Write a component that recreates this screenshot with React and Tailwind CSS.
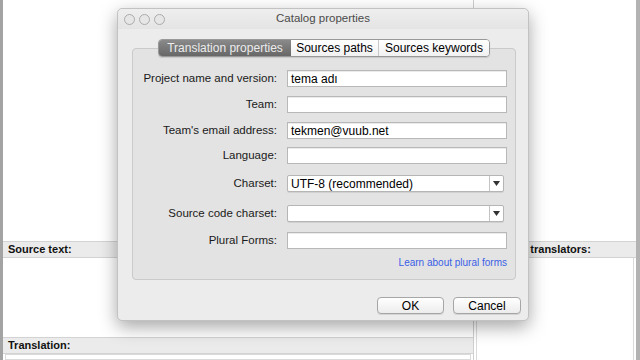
import React from "react";

const font = "font-['Liberation_Sans','Lucida_Grande',Arial,sans-serif]";

const Field = ({ label, value, combo, className = "" }) => (
    <div className={`flex items-center ${className}`}>
        <div className="w-[144px] text-right text-[11.5px] text-[#1a1a1a] leading-none">{label}</div>
        {combo ? (
            <div className="ml-[10px] w-[217px] h-[17px] flex bg-white border border-[#b5b5b5] rounded-[2px] shadow-[0_1px_0_rgba(0,0,0,0.08)]">
                <div className="flex-1 flex items-center px-[3px] text-[12px] text-black">{value}</div>
                <div className="w-[14px] border-l border-[#c4c4c4] flex items-center justify-center">
                    <svg width="7" height="5" viewBox="0 0 7 5">
                        <path d="M0 0 L7 0 L3.5 5 Z" fill="#333" />
                    </svg>
                </div>
            </div>
        ) : (
            <div className="ml-[10px] w-[220px] h-[17px] flex items-center px-[3px] bg-white border border-[#b8b8b8] shadow-[inset_0_1px_0_rgba(0,0,0,0.08)] text-[12px] text-black">
                {value}
            </div>
        )}
    </div>
);

const Header = ({ children }) => (
    <div className="h-[17px] flex items-center px-[5px] bg-[#ebebeb] border-y border-[#d3d3d3] text-[11px] font-bold text-[#111]">
        {children}
    </div>
);

export default function App() {
    return (
        <div className={`relative w-[640px] h-[360px] overflow-hidden bg-white flex ${font}`}>
            <div className="w-[3px] bg-[#a3a3a3]" />

            <div className="w-[471px] flex flex-col border-r border-[#cfcfcf]">
                <div className="h-[241px] bg-white" />
                <Header>Source text:</Header>
                <div className="h-[79px] bg-white" />
                <Header>Translation:</Header>
                <div className="flex-1 bg-white mx-[2px] border border-[#dadada]" />
            </div>

            <div className="flex-1 flex flex-col">
                <div className="h-[241px] bg-white" />
                <Header>Notes for translators:</Header>
                <div className="flex-1 bg-white mx-[2px] border-x border-[#dadada]" />
            </div>

            <div className="w-[4px] bg-[#b3b3b3]" />

            {/* dialog */}
            <div className="absolute left-[117px] top-[8px] w-[412px] h-[313px] flex flex-col rounded-[5px] bg-[#ececec] border border-[#c2c2c2] shadow-[0_6px_18px_rgba(0,0,0,0.35)]">
                <div className="relative h-[20px] flex items-center pl-[6px] gap-[4px] rounded-t-[5px] bg-gradient-to-b from-[#eeeeee] to-[#e4e4e4]">
                    <div className="w-[11px] h-[11px] rounded-full bg-[#e6e6e6] border border-[#ababab]" />
                    <div className="w-[11px] h-[11px] rounded-full bg-[#e6e6e6] border border-[#ababab]" />
                    <div className="w-[11px] h-[11px] rounded-full bg-[#e6e6e6] border border-[#ababab]" />
                    <div className="absolute inset-0 flex items-center justify-center text-[11.5px] text-[#4a4a4a]">
                        Catalog properties
                    </div>
                </div>

                <div className="pl-[14px] pr-[12px] pt-[10px] flex flex-col">
                    <div className="relative z-10 flex justify-center mb-[-9px]">
                        <div className="flex h-[18px] rounded-[4px] border border-[#989898] overflow-hidden text-[12px] shadow-[0_1px_1px_rgba(0,0,0,0.12)]">
                            <div className="w-[132px] flex items-center justify-center bg-gradient-to-b from-[#8a8a8a] to-[#676767] text-[#ececec]">
                                Translation properties
                            </div>
                            <div className="w-[88px] flex items-center justify-center bg-gradient-to-b from-white to-[#f1f1f1] text-black border-r border-[#c8c8c8]">
                                Sources paths
                            </div>
                            <div className="w-[110px] flex items-center justify-center bg-gradient-to-b from-white to-[#f1f1f1] text-black">
                                Sources keywords
                            </div>
                        </div>
                    </div>

                    <div className="h-[232px] rounded-[4px] border border-[#cacaca] bg-[#e3e3e3] pt-[21px] flex flex-col">
                        <Field label="Project name and version:" value="tema adı" />
                        <Field className="mt-[9px]" label="Team:" value="" />
                        <Field className="mt-[9px]" label="Team's email address:" value="tekmen@vuub.net" />
                        <Field className="mt-[8px]" label="Language:" value="" />
                        <Field className="mt-[11px]" combo label="Charset:" value="UTF-8 (recommended)" />
                        <Field className="mt-[13px]" combo label="Source code charset:" value="" />
                        <Field className="mt-[10px]" label="Plural Forms:" value="" />
                        <div className="mt-[7px] w-[374px] text-right text-[10px] leading-[13px] text-[#3a5ee6]">
                            Learn about plural forms
                        </div>
                    </div>

                    <div className="flex justify-end gap-[9px] mt-[17px] mr-[-5px]">
                        <button className="w-[67px] h-[17px] rounded-[4px] border border-[#a6a6a6] bg-gradient-to-b from-white to-[#ececec] text-[12px] text-black leading-none shadow-[0_1px_0_rgba(0,0,0,0.1)]">
                            OK
                        </button>
                        <button className="w-[68px] h-[17px] rounded-[4px] border border-[#a6a6a6] bg-gradient-to-b from-white to-[#ececec] text-[12px] text-black leading-none shadow-[0_1px_0_rgba(0,0,0,0.1)]">
                            Cancel
                        </button>
                    </div>
                </div>
            </div>
        </div>
    );
}
